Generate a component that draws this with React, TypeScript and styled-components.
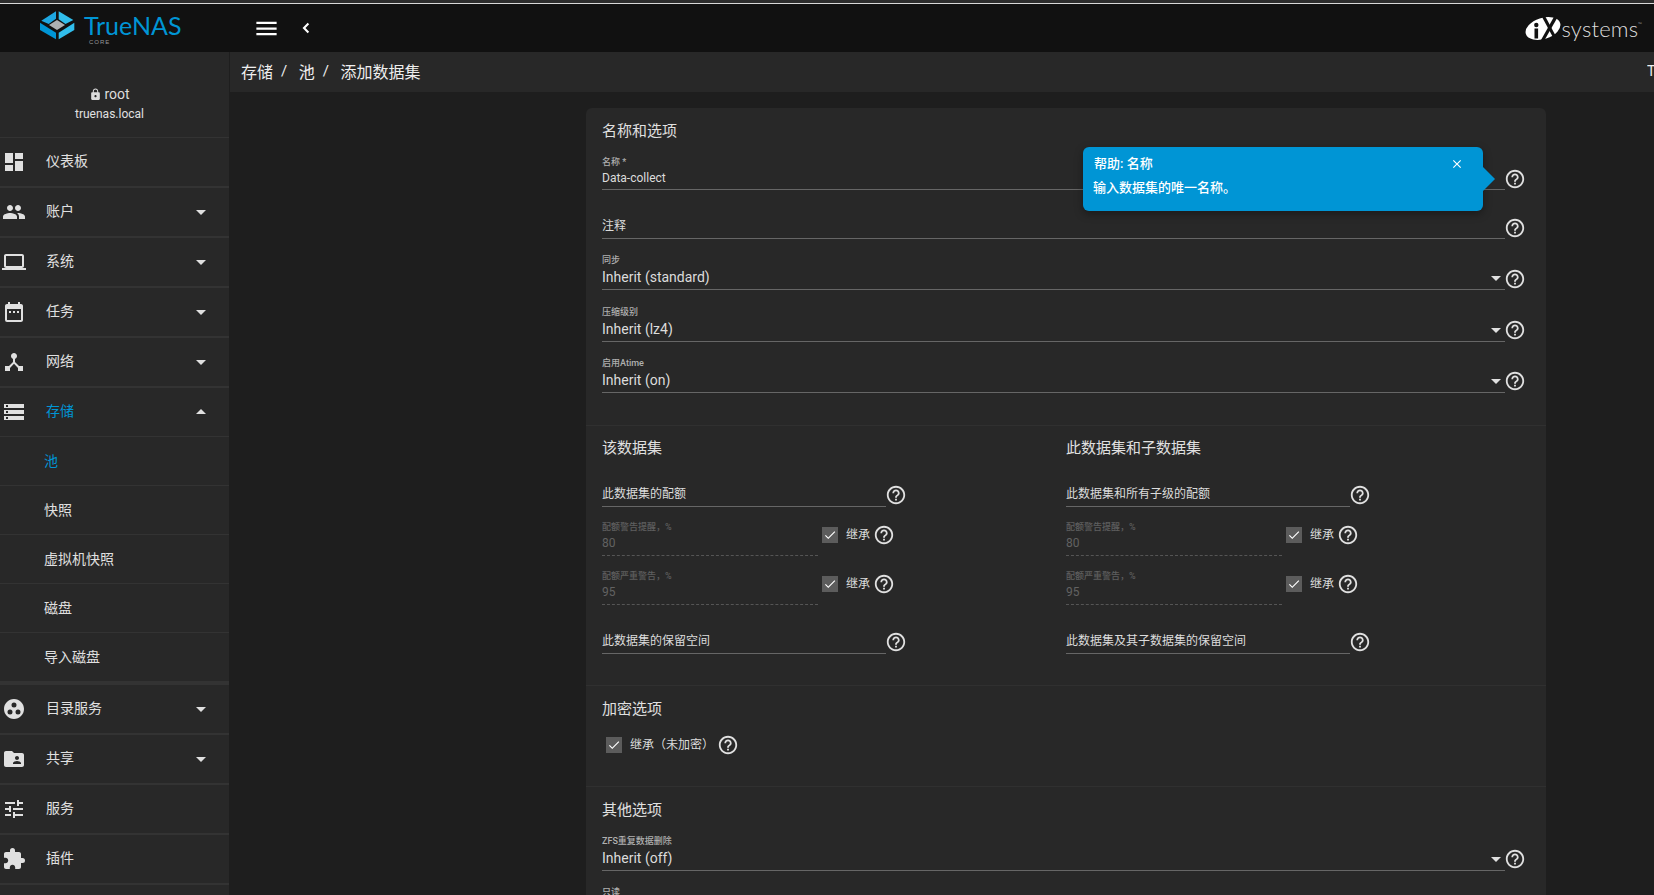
import React from "react";
import styled, { createGlobalStyle } from "styled-components";
import {
  MdDashboard, MdGroup, MdLaptop, MdDateRange, MdDeviceHub, MdStorage, MdGroupWork, MdFolderShared,
  MdTune, MdExtension, MdLock, MdHelpOutline, MdMenu, MdArrowDropDown, MdArrowDropUp,
  MdClose, MdCheck,
} from "react-icons/md";

const Global = createGlobalStyle`
  html, body { margin: 0; padding: 0; height: 100%; overflow: hidden; background: #1e1e1e; }
  * { box-sizing: border-box; }
  body { font-family: Roboto, "Noto Sans CJK SC", sans-serif; color: #e0e0e0; }
`;

const Page = styled.div`
  width: 1654px; height: 895px; display: flex; flex-direction: column; overflow: hidden;
`;
const TopStrip = styled.div`
  height: 4px; flex: none; background: #2c2c2c; border-bottom: 1px solid #d8d8d8;
`;
const Header = styled.header`
  height: 48px; flex: none; background: #111; display: flex; align-items: center;
`;
const Brand = styled.div`
  width: 230px; padding-left: 40px; display: flex; align-items: flex-start; gap: 8px; flex: none;
`;
const Word = styled.div`display: flex; flex-direction: column;`;
const WordMain = styled.span`
  font-family: Lato, sans-serif; font-size: 25px; line-height: 29px; color: #0095d5;
`;
const WordSub = styled.span`
  font-family: "Liberation Sans", sans-serif; font-size: 6px; line-height: 7px; color: #999; letter-spacing: 1px; margin-left: 5px; margin-top: -1px;
`;
const HeadBtn = styled.div<{ $w: number }>`
  width: ${p => p.$w}px; display: flex; justify-content: center; color: #fff; flex: none;
`;
const IxBrand = styled.div`
  margin-left: auto; display: flex; align-items: center; padding-right: 12px;
`;
const IxText = styled.span`
  font-family: Lato, sans-serif; font-weight: 300; font-size: 22px; line-height: 26px; color: #ddd; letter-spacing: 0.2px; margin-top: -3px;
`;
const IxMark = styled.span`font-size: 5px; vertical-align: 11px; letter-spacing: 0;`;
const Body = styled.div`flex: 1; display: flex; min-height: 0;`;
const Sidebar = styled.nav`
  width: 229px; flex: none; background: #282828; margin-right: 1px;
`;
const UserBlock = styled.div`
  height: 86px; border-bottom: 1px solid #333; display: flex; flex-direction: column; align-items: center;
  padding-top: 32px; padding-right: 10px;
`;
const UserName = styled.div`
  font-size: 14px; line-height: 20px; display: flex; align-items: center; gap: 2px; color: #ddd;
`;
const UserHost = styled.div`font-size: 12px; line-height: 20px; color: #e0e0e0;`;
const NavRow = styled.div<{ $active?: boolean }>`
  height: 50px; border-bottom: 2px solid #333; display: flex; align-items: center; padding-left: 2px;
  color: ${p => (p.$active ? "#0095d5" : "#e0e0e0")}; font-size: 14px;
`;
const NavIcon = styled.span`
  width: 24px; height: 24px; color: #e0e0e0; flex: none; display: flex;
`;
const NavText = styled.span`margin-left: 20px; flex: 1; margin-top: -4px;`;
const NavCaret = styled.span`
  width: 24px; height: 24px; color: #e0e0e0; margin-right: 16px; display: flex;
`;
const SubMenu = styled.div`border-bottom: 3px solid #333;`;
const SubRow = styled.div<{ $active?: boolean }>`
  height: 49px; border-bottom: 1px solid #333; display: flex; align-items: center; padding-left: 44px;
  padding-bottom: 3px; font-size: 14px; color: ${p => (p.$active ? "#0095d5" : "#e0e0e0")};
`;
const NavHeadRow = styled(NavRow)`border-bottom-width: 1px; height: 49px;`;
const Main = styled.main`flex: 1; min-width: 0; display: flex; flex-direction: column;`;
const Crumbs = styled.div`
  height: 40px; flex: none; background: #282828; display: flex; align-items: center; padding: 0 0 3px 11px;
  font-size: 16px; color: #eee; overflow: hidden;
`;
const Sep = styled.span`margin: 0 11.5px 0 8px; font-size: 15px;`;
const Copyright = styled.span`
  margin-left: auto; width: 7px; overflow: hidden; white-space: nowrap; font-size: 14px;
`;
const Scroll = styled.div`flex: 1; padding: 16px 0 0 356px; min-height: 0; overflow: hidden;`;
const Card = styled.section`
  width: 960px; background: #282828; border-radius: 6px 6px 0 0; position: relative; height: 900px;
`;
const Section = styled.div<{ $h: number; $divider?: boolean; $top?: number }>`
  height: ${p => p.$h}px; padding: ${p => p.$top ?? 13}px 20px 0 16px;
  border-top: ${p => (p.$divider ? "1px solid #303030" : "none")};
`;
const Title = styled.h3`
  margin: 0; font-weight: 400; font-size: 15px; line-height: 20px; color: #e0e0e0;
`;
const Columns = styled.div`display: grid; grid-template-columns: 464px 1fr;`;
const FieldRow = styled.div<{ $h: number; $w?: number }>`
  height: ${p => p.$h}px; display: flex; align-items: flex-end;
  width: ${p => (p.$w ? `${p.$w}px` : "auto")};
`;
const Field = styled.div<{ $dashed?: boolean; $w?: number }>`
  flex: ${p => (p.$w ? "none" : "1")}; width: ${p => (p.$w ? `${p.$w}px` : "auto")}; min-width: 0;
  border-bottom: 1px ${p => (p.$dashed ? "dashed #555" : "solid #666")};
  display: flex; flex-direction: column;
`;
const Label = styled.label<{ $off?: boolean; $gap: number }>`
  font-size: 9px; font-weight: 500; line-height: 12px; color: ${p => (p.$off ? "#5f5f5f" : "#b0b0b0")};
  margin-bottom: ${p => p.$gap}px; white-space: nowrap;
`;
const Value = styled.div<{ $size: number; $off?: boolean; $pad: number }>`
  font-size: ${p => p.$size}px; line-height: 16px; color: ${p => (p.$off ? "#626262" : "#dcdcdc")};
  padding-bottom: ${p => p.$pad}px; display: flex; justify-content: space-between; white-space: nowrap; height: ${p => 16 + p.$pad}px;
`;
const Caret = styled.span`
  color: #e0e0e0; display: flex; margin: -3px -3px 0 0; height: 24px;
`;
const Help = styled.span<{ $drop: number; $ml?: number }>`
  width: 22px; height: 22px; color: #e0e0e0; margin-left: ${p => p.$ml ?? -1}px; margin-bottom: ${p => p.$drop}px; flex: none; display: flex;
`;
const Check = styled.span<{ $ml: number }>`
  width: 16px; height: 16px; background: #5c5c5c; color: #fff; display: flex; align-items: center; justify-content: center; margin-left: ${p => p.$ml}px; flex: none;
`;
const CheckText = styled.span`font-size: 12px; line-height: 16px; margin-left: 8px; color: #dcdcdc; white-space: nowrap;`;
const CheckWrap = styled.div`display: flex; align-items: center; margin-bottom: 10px;`;
const EncRow = styled.div`display: flex; align-items: center; margin-top: 15px;`;
const SmallHelp = styled.span<{ $ml: number }>`width: 22px; height: 22px; color: #e0e0e0; margin-left: ${p => p.$ml}px; display: flex;`;
const Tip = styled.div`
  position: absolute; left: 497px; top: 39px; width: 400px; height: 64px; background: #0095d5;
  border-radius: 6px; box-shadow: 0 3px 8px rgba(0,0,0,.35); color: #fff; padding: 8px 12px 0 11px;
  &::after {
    content: ""; position: absolute; left: 100%; top: 20px; border-left: 12px solid #0095d5;
    border-top: 12px solid transparent; border-bottom: 12px solid transparent;
  }
`;
const TipHead = styled.div`
  display: flex; justify-content: space-between; align-items: center; font-size: 13px; line-height: 18px; font-weight: 500; padding-right: 7px;
`;
const TipBody = styled.div`font-size: 13px; line-height: 18px; margin-top: 6px; margin-left: -1px; font-weight: 500;`;

const HelpIcon = ({ drop = 0, ml }: { drop?: number; ml?: number }) => (
  <Help $drop={drop} $ml={ml}><MdHelpOutline size={22} /></Help>
);

const TrueLogo = () => (
  <svg width="36" height="30" viewBox="0 0 36 30">
    <polygon points="1.3,9.7 16,0.3 16,7.7 8.7,13" fill="#1ea7e1" />
    <polygon points="18.7,0.3 33.3,9 25.5,13 18.7,8.3" fill="#31beec" />
    <polygon points="17,9 25,14 17,19 9,14" fill="#aeb1b3" />
    <polygon points="0,11.7 16,21.7 16,28.3 0,19" fill="#0095d5" />
    <polygon points="34.3,11.7 18.7,21.7 18.7,28.3 34.3,19" fill="#31beec" />
  </svg>
);

const IxLogo = () => (
  <svg width="36" height="27" viewBox="0 0 36 27">
    <ellipse cx="18" cy="13.5" rx="18" ry="10.5" transform="rotate(-18 18 13.5)" fill="#fff" />
    <rect x="9.5" y="13.5" width="3.6" height="10" fill="#111" />
    <circle cx="11.3" cy="10" r="2.2" fill="#111" />
    <path d="M16.5 1 L19.5 0 L34 27 L30.5 27 Z" fill="#111" />
    <path d="M30 0 L33 1.5 L19 26 L16 25 Z" fill="#111" />
  </svg>
);

const BackChevron = () => (
  <svg width="10" height="14" viewBox="0 0 10 14">
    <polyline points="8,1.5 2.5,7 8,12.5" fill="none" stroke="#fff" strokeWidth="2.6" />
  </svg>
);

type Item = { icon: React.ReactNode; text: string; caret?: "down" | "up"; active?: boolean };
const before: Item[] = [
  { icon: <MdDashboard size={24} />, text: "仪表板" },
  { icon: <MdGroup size={24} />, text: "账户", caret: "down" },
  { icon: <MdLaptop size={24} />, text: "系统", caret: "down" },
  { icon: <MdDateRange size={24} />, text: "任务", caret: "down" },
  { icon: <MdDeviceHub size={24} />, text: "网络", caret: "down" },
];
const after: Item[] = [
  { icon: <MdGroupWork size={24} />, text: "目录服务", caret: "down" },
  { icon: <MdFolderShared size={24} />, text: "共享", caret: "down" },
  { icon: <MdTune size={24} />, text: "服务" },
  { icon: <MdExtension size={24} />, text: "插件" },
];
const Caretted = ({ dir }: { dir?: "down" | "up" }) =>
  dir ? <NavCaret>{dir === "down" ? <MdArrowDropDown size={24} /> : <MdArrowDropUp size={24} />}</NavCaret> : null;

const NavItem = ({ item }: { item: Item }) => (
  <NavRow>
    <NavIcon>{item.icon}</NavIcon>
    <NavText>{item.text}</NavText>
    <Caretted dir={item.caret} />
  </NavRow>
);

const Select = ({ label, value, h, drop }: { label: string; value: string; h: number; drop: number }) => (
  <FieldRow $h={h}>
    <Field>
      <Label $gap={3}>{label}</Label>
      <Value $size={14} $pad={4}>
        {value}
        <Caret><MdArrowDropDown size={24} /></Caret>
      </Value>
    </Field>
    <HelpIcon drop={drop} />
  </FieldRow>
);

const Threshold = ({ label, value, h }: { label: string; value: string; h: number }) => (
  <FieldRow $h={h}>
    <Field $dashed $w={216}>
      <Label $off $gap={2}>{label}</Label>
      <Value $size={12} $off $pad={4}>{value}</Value>
    </Field>
    <CheckWrap>
      <Check $ml={4}><MdCheck size={14} /></Check>
      <CheckText>继承</CheckText>
      <SmallHelp $ml={3}><MdHelpOutline size={22} /></SmallHelp>
    </CheckWrap>
  </FieldRow>
);

const Plain = ({ text, w, pad = 4, size = 12 }: { text: string; w?: number; pad?: number; size?: number }) => (
  <Field $w={w}>
    <Value $size={size} $pad={pad}>{text}</Value>
  </Field>
);

const QuotaColumn = ({ title, quota, reserve }: { title: string; quota: string; reserve: string }) => (
  <div>
    <Title>{title}</Title>
    <FieldRow $h={49}>
      <Plain text={quota} w={284} />
      <HelpIcon drop={1} />
    </FieldRow>
    <Threshold label="配额警告提醒，%" value="80" h={49} />
    <Threshold label="配额严重警告，%" value="95" h={49} />
    <FieldRow $h={49}>
      <Plain text={reserve} w={284} />
      <HelpIcon drop={1} />
    </FieldRow>
  </div>
);

export default function App() {
  return (
    <Page>
      <Global />
      <TopStrip />
      <Header>
        <Brand>
          <TrueLogo />
          <Word>
            <WordMain>TrueNAS</WordMain>
            <WordSub>CORE</WordSub>
          </Word>
        </Brand>
        <HeadBtn $w={72}><MdMenu size={27} /></HeadBtn>
        <HeadBtn $w={8}><BackChevron /></HeadBtn>
        <IxBrand>
          <IxLogo />
          <IxText>systems<IxMark>™</IxMark></IxText>
        </IxBrand>
      </Header>
      <Body>
        <Sidebar>
          <UserBlock>
            <UserName><MdLock size={13} />root</UserName>
            <UserHost>truenas.local</UserHost>
          </UserBlock>
          {before.map(i => <NavItem key={i.text} item={i} />)}
          <NavHeadRow $active>
            <NavIcon><MdStorage size={24} /></NavIcon>
            <NavText>存储</NavText>
            <Caretted dir="up" />
          </NavHeadRow>
          <SubMenu>
            <SubRow $active>池</SubRow>
            <SubRow>快照</SubRow>
            <SubRow>虚拟机快照</SubRow>
            <SubRow>磁盘</SubRow>
            <SubRow>导入磁盘</SubRow>
          </SubMenu>
          {after.map(i => <NavItem key={i.text} item={i} />)}
        </Sidebar>
        <Main>
          <Crumbs>
            <span>存储</span><Sep>/</Sep><span>池</span><Sep>/</Sep><span>添加数据集</span>
            <Copyright>TrueNAS CORE</Copyright>
          </Crumbs>
          <Scroll>
            <Card>
              <Section $h={317}>
                <Title>名称和选项</Title>
                <FieldRow $h={49}>
                  <Field>
                    <Label $gap={2}>名称 *</Label>
                    <Value $size={12} $pad={3}>Data-collect</Value>
                  </Field>
                  <HelpIcon drop={0} />
                </FieldRow>
                <FieldRow $h={49}>
                  <Plain text="注释" />
                  <HelpIcon drop={0} />
                </FieldRow>
                <Select label="同步" value="Inherit (standard)" h={51} drop={0} />
                <Select label="压缩级别" value="Inherit (lz4)" h={52} drop={1} />
                <Select label="启用Atime" value="Inherit (on)" h={51} drop={1} />
              </Section>
              <Section $h={260} $divider $top={12}>
                <Columns>
                  <QuotaColumn title="该数据集" quota="此数据集的配额" reserve="此数据集的保留空间" />
                  <QuotaColumn title="此数据集和子数据集" quota="此数据集和所有子级的配额" reserve="此数据集及其子数据集的保留空间" />
                </Columns>
              </Section>
              <Section $h={101} $divider>
                <Title>加密选项</Title>
                <EncRow>
                  <Check $ml={4}><MdCheck size={14} /></Check>
                  <CheckText>继承（未加密）</CheckText>
                  <SmallHelp $ml={3}><MdHelpOutline size={22} /></SmallHelp>
                </EncRow>
              </Section>
              <Section $h={200} $divider>
                <Title>其他选项</Title>
                <FieldRow $h={51}>
                  <Field>
                    <Label $gap={3}>ZFS重复数据删除</Label>
                    <Value $size={14} $pad={4}>
                      Inherit (off)
                      <Caret><MdArrowDropDown size={24} /></Caret>
                    </Value>
                  </Field>
                  <HelpIcon drop={1} />
                </FieldRow>
                <FieldRow $h={27}>
                  <Label $gap={0}>只读</Label>
                </FieldRow>
              </Section>
              <Tip>
                <TipHead>帮助: 名称<MdClose size={14} /></TipHead>
                <TipBody>输入数据集的唯一名称。</TipBody>
              </Tip>
            </Card>
          </Scroll>
        </Main>
      </Body>
    </Page>
  );
}
